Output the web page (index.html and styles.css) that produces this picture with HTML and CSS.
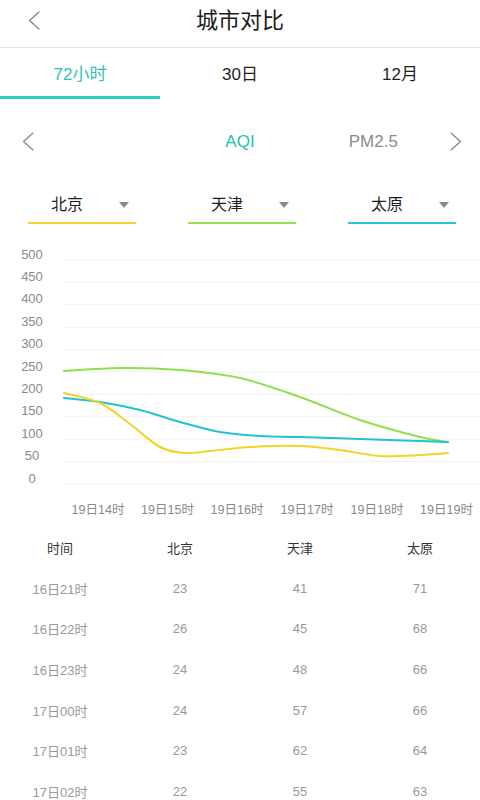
FILE: index.html
```html
<!DOCTYPE html>
<html lang="zh-CN">
<head>
<meta charset="utf-8">
<title>城市对比</title>
<link rel="stylesheet" href="styles.css">
</head>
<body>
<div class="page">
  <header class="topbar">
    <div class="back">
      <svg width="12" height="20" viewBox="0 0 12 20"><polyline points="11,1 1.5,9.5 11,18" fill="none" stroke="#8a8a8a" stroke-width="1.4" stroke-linecap="round" stroke-linejoin="round"/></svg>
    </div>
    <h1 class="title">城市对比</h1>
    <div></div>
  </header>

  <nav class="tabs">
    <div class="tab active">72小时</div>
    <div class="tab">30日</div>
    <div class="tab">12月</div>
  </nav>

  <div class="metrics">
    <div class="chev chev-left">
      <svg width="12" height="20" viewBox="0 0 12 20"><polyline points="11,1 1.5,9.5 11,18" fill="none" stroke="#8a8a8a" stroke-width="1.3" stroke-linecap="round" stroke-linejoin="round"/></svg>
    </div>
    <div></div>
    <div class="metric active">AQI</div>
    <div class="metric">PM2.5</div>
    <div class="chev chev-right">
      <svg width="12" height="20" viewBox="0 0 12 20"><polyline points="1,1 10.5,9.5 1,18" fill="none" stroke="#8a8a8a" stroke-width="1.3" stroke-linecap="round" stroke-linejoin="round"/></svg>
    </div>
  </div>

  <div class="cities">
    <div class="city city-yellow"><span>北京</span><i class="tri"></i></div>
    <div class="city city-green"><span>天津</span><i class="tri"></i></div>
    <div class="city city-cyan"><span>太原</span><i class="tri"></i></div>
  </div>

  <svg class="chart" width="480" height="287" viewBox="0 240 480 287">
    <g class="grid" stroke="#f1f1f1" stroke-width="1">
      <line x1="64" y1="260" x2="480" y2="260"/>
      <line x1="64" y1="282.4" x2="480" y2="282.4"/>
      <line x1="64" y1="304.8" x2="480" y2="304.8"/>
      <line x1="64" y1="327.2" x2="480" y2="327.2"/>
      <line x1="64" y1="349.6" x2="480" y2="349.6"/>
      <line x1="64" y1="372" x2="480" y2="372"/>
      <line x1="64" y1="394.4" x2="480" y2="394.4"/>
      <line x1="64" y1="416.8" x2="480" y2="416.8"/>
      <line x1="64" y1="439.2" x2="480" y2="439.2"/>
      <line x1="64" y1="461.6" x2="480" y2="461.6"/>
      <line x1="64" y1="484" x2="480" y2="484"/>
    </g>
    <g class="ylabels" text-anchor="middle">
      <text x="32" y="258.5">500</text>
      <text x="32" y="281">450</text>
      <text x="32" y="303.3">400</text>
      <text x="32" y="325.7">350</text>
      <text x="32" y="348.1">300</text>
      <text x="32" y="370.5">250</text>
      <text x="32" y="392.9">200</text>
      <text x="32" y="415.3">150</text>
      <text x="32" y="437.7">100</text>
      <text x="32" y="460.1">50</text>
      <text x="32" y="482.5">0</text>
    </g>
    <g class="xlabels" text-anchor="middle">
      <text x="98" y="513.5">19日14时</text>
      <text x="167.5" y="513.5">19日15时</text>
      <text x="237" y="513.5">19日16时</text>
      <text x="307" y="513.5">19日17时</text>
      <text x="377" y="513.5">19日18时</text>
      <text x="446.5" y="513.5">19日19时</text>
    </g>
    <path class="line-green" d="M64 371 C73.3 370.5 100.7 368.2 120 368 C139.3 367.8 160 368.3 180 370 C200 371.7 220 373.5 240 378 C260 382.5 280 390 300 397 C320 404 340 413.3 360 420 C380 426.7 405.3 433.3 420 437 C434.7 440.7 443.3 441.2 448 442"/>
    <path class="line-cyan" d="M64 398 C70 398.7 87.3 400 100 402 C112.7 404 126.7 406.7 140 410 C153.3 413.3 166.7 418.3 180 422 C193.3 425.7 206.7 429.7 220 432 C233.3 434.3 246.7 435.2 260 436 C273.3 436.8 283.3 436.5 300 437 C316.7 437.5 340 438.3 360 439 C380 439.7 405.3 440.5 420 441 C434.7 441.5 443.3 441.8 448 442"/>
    <path class="line-yellow" d="M64 393 C70 394.7 89 397.8 100 403 C111 408.2 120 416.7 130 424 C140 431.3 150.8 442.2 160 447 C169.2 451.8 176.7 452.3 185 453 C193.3 453.7 199.2 452 210 451 C220.8 450 235 447.8 250 447 C265 446.2 285 445.5 300 446 C315 446.5 326.7 448.3 340 450 C353.3 451.7 366.7 455.2 380 456 C393.3 456.8 408.7 455.5 420 455 C431.3 454.5 443.3 453.3 448 453"/>
  </svg>

  <div class="table">
    <div class="row head"><span>时间</span><span>北京</span><span>天津</span><span>太原</span></div>
    <div class="row"><span>16日21时</span><span>23</span><span>41</span><span>71</span></div>
    <div class="row"><span>16日22时</span><span>26</span><span>45</span><span>68</span></div>
    <div class="row"><span>16日23时</span><span>24</span><span>48</span><span>66</span></div>
    <div class="row"><span>17日00时</span><span>24</span><span>57</span><span>66</span></div>
    <div class="row"><span>17日01时</span><span>23</span><span>62</span><span>64</span></div>
    <div class="row"><span>17日02时</span><span>22</span><span>55</span><span>63</span></div>
  </div>
</div>
</body>
</html>
```

FILE: styles.css
```css
* { box-sizing: border-box; }

html, body {
  margin: 0;
  padding: 0;
  background: #ffffff;
}

body {
  font-family: "Liberation Sans", "Noto Sans CJK SC", sans-serif;
  color: #222;
  width: 480px;
  height: 800px;
  overflow: hidden;
}

.page {
  width: 480px;
}

.topbar {
  display: grid;
  grid-template-columns: 60px 1fr 60px;
  align-items: center;
  height: 48px;
  border-bottom: 1px solid #e2e2e2;
}

.back {
  display: flex;
  align-items: center;
  padding-left: 28px;
  height: 100%;
  padding-bottom: 6px;
}

.back svg, .chev svg { display: block; }

.title {
  margin: 0;
  text-align: center;
  font-size: 22px;
  font-weight: 400;
  color: #1a1a1a;
  line-height: 40px;
  padding-bottom: 6px;
}

.tabs {
  display: grid;
  grid-template-columns: repeat(3, 1fr);
  height: 51px;
}

.tab {
  display: flex;
  align-items: center;
  justify-content: center;
  font-size: 17px;
  color: #1f1f1f;
  border-bottom: 3px solid transparent;
  padding-top: 1px;
}

.tab.active {
  color: #2cc3b3;
  border-bottom-color: #2ec8c2;
}

.metrics {
  display: grid;
  grid-template-columns: 40px 1fr 1fr 1fr 40px;
  align-items: center;
  height: 42px;
  margin-top: 22px;
}

.chev-left { padding-left: 22px; }
.chev-right { padding-left: 10px; }

.metric {
  text-align: center;
  font-size: 17px;
  color: #8c8c8c;
}

.metric.active { color: #22c4a8; }

.cities {
  display: grid;
  grid-template-columns: repeat(3, 160px);
  padding-top: 31px;
  padding-left: 2px;
  margin-bottom: 16px;
}

.city {
  justify-self: center;
  width: 108px;
  display: flex;
  align-items: center;
  justify-content: space-between;
  padding: 0 7px 6px 23px;
  font-size: 16px;
  line-height: 22px;
  color: #1f1f1f;
  border-bottom: 2px solid;
}

.city-yellow { border-bottom-color: #f3d23a; }
.city-green { border-bottom-color: #95e04e; }
.city-cyan { border-bottom-color: #2cc6d6; }

.tri {
  width: 0;
  height: 0;
  border-left: 5px solid transparent;
  border-right: 5px solid transparent;
  border-top: 6px solid #8a8a8a;
}

.chart {
  display: block;
}

.ylabels text {
  font-size: 13px;
  fill: #8a8a8a;
  font-family: "Liberation Sans", "Noto Sans CJK SC", sans-serif;
}

.xlabels text {
  font-size: 12.5px;
  fill: #8a8a8a;
  font-family: "Liberation Sans", "Noto Sans CJK SC", sans-serif;
}

.line-green, .line-cyan, .line-yellow {
  fill: none;
  stroke-width: 2;
  stroke-linecap: round;
}

.line-green { stroke: #8fe04a; }
.line-cyan { stroke: #21c3d3; }
.line-yellow { stroke: #f2d424; }

.table {
  display: flex;
  flex-direction: column;
}

.row {
  display: grid;
  grid-template-columns: repeat(4, 120px);
  height: 40.7px;
  align-items: center;
  font-size: 13px;
  color: #999999;
}

.row span { text-align: center; }

.row.head { color: #333333; }
```
